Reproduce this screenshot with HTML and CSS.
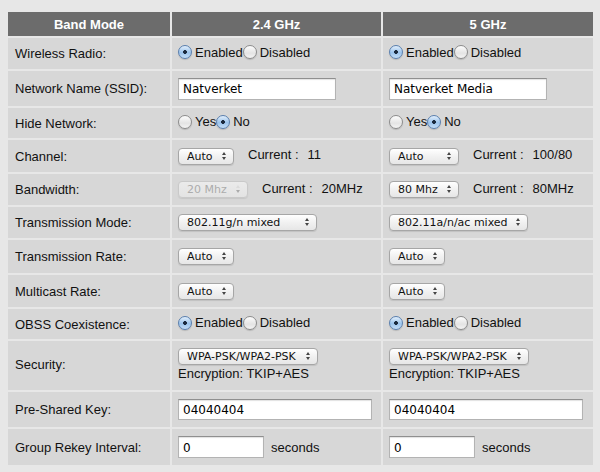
FILE: index.html
```html
<!doctype html>
<html lang="en">
<head>
<meta charset="utf-8">
<title>Wireless Settings</title>
<meta name="viewport" content="width=device-width,initial-scale=1">
<link rel="stylesheet" href="styles.css">
</head>
<body>
<table class="settings">
  <colgroup><col class="c-label"><col class="c-band"><col class="c-band5"></colgroup>
  <thead>
    <tr><th>Band Mode</th><th>2.4 GHz</th><th>5 GHz</th></tr>
  </thead>
  <tbody>
    <tr class="r-31">
      <td>Wireless Radio:</td>
      <td><label class="radio"><input type="radio" name="radio24" checked>Enabled</label><label class="radio"><input type="radio" name="radio24">Disabled</label></td>
      <td><label class="radio"><input type="radio" name="radio5" checked>Enabled</label><label class="radio"><input type="radio" name="radio5">Disabled</label></td>
    </tr>
    <tr class="r-35">
      <td>Network Name (SSID):</td>
      <td><input class="text w-ssid" type="text" value="Natverket"></td>
      <td><input class="text w-ssid" type="text" value="Natverket Media"></td>
    </tr>
    <tr class="r-30">
      <td>Hide Network:</td>
      <td><label class="radio"><input type="radio" name="hide24">Yes</label><label class="radio"><input type="radio" name="hide24" checked>No</label></td>
      <td><label class="radio"><input type="radio" name="hide5">Yes</label><label class="radio"><input type="radio" name="hide5" checked>No</label></td>
    </tr>
    <tr class="r-32">
      <td>Channel:</td>
      <td><span class="select w-56"><select><option>Auto</option></select></span><span class="current">Current :</span><span class="value">11</span></td>
      <td><span class="select w-70"><select><option>Auto</option></select></span><span class="current">Current :</span><span class="value">100/80</span></td>
    </tr>
    <tr class="r-31">
      <td>Bandwidth:</td>
      <td><span class="select w-70 disabled"><select disabled><option>20 Mhz</option></select></span><span class="current">Current :</span><span class="value">20MHz</span></td>
      <td><span class="select w-70"><select><option>80 Mhz</option></select></span><span class="current">Current :</span><span class="value">80MHz</span></td>
    </tr>
    <tr class="r-31">
      <td>Transmission Mode:</td>
      <td><span class="select w-139"><select><option>802.11g/n mixed</option></select></span></td>
      <td><span class="select w-139"><select><option>802.11a/n/ac mixed</option></select></span></td>
    </tr>
    <tr class="r-33">
      <td>Transmission Rate:</td>
      <td><span class="select w-56"><select><option>Auto</option></select></span></td>
      <td><span class="select w-56"><select><option>Auto</option></select></span></td>
    </tr>
    <tr class="r-32">
      <td>Multicast Rate:</td>
      <td><span class="select w-56"><select><option>Auto</option></select></span></td>
      <td><span class="select w-56"><select><option>Auto</option></select></span></td>
    </tr>
    <tr class="r-30">
      <td>OBSS Coexistence:</td>
      <td><label class="radio"><input type="radio" name="obss24" checked>Enabled</label><label class="radio"><input type="radio" name="obss24">Disabled</label></td>
      <td><label class="radio"><input type="radio" name="obss5" checked>Enabled</label><label class="radio"><input type="radio" name="obss5">Disabled</label></td>
    </tr>
    <tr class="r-47">
      <td>Security:</td>
      <td><span class="select w-140"><select><option>WPA-PSK/WPA2-PSK</option></select></span><div class="note">Encryption: TKIP+AES</div></td>
      <td><span class="select w-140"><select><option>WPA-PSK/WPA2-PSK</option></select></span><div class="note">Encryption: TKIP+AES</div></td>
    </tr>
    <tr class="r-35">
      <td>Pre-Shared Key:</td>
      <td><input class="text w-key" type="text" value="04040404"></td>
      <td><input class="text w-key" type="text" value="04040404"></td>
    </tr>
    <tr class="r-36">
      <td>Group Rekey Interval:</td>
      <td><input class="text w-rekey" type="text" value="0"><span class="unit">seconds</span></td>
      <td><input class="text w-rekey" type="text" value="0"><span class="unit">seconds</span></td>
    </tr>
  </tbody>
</table>
</body>
</html>
```

FILE: styles.css
```css
body{margin:10px 0 0 6px;background:#e7e7e7;font-family:"Liberation Sans",Arial,sans-serif;font-size:13px;color:#111;}
.settings{border-collapse:separate;border-spacing:2px;table-layout:fixed;width:589px;}
.c-label{width:162px;}
.c-band{width:209px;}
.c-band5{width:210px;}
th{background:#6c6c6c;color:#fff;font-weight:bold;font-size:13px;height:24px;padding:0;text-align:center;}
td{background:#d7d7d7;padding:0 6px;vertical-align:middle;white-space:nowrap;}
td:first-child{padding-left:7px;}
.r-30 td{height:30px;}
.r-31 td{height:31px;}
.r-32 td{height:32px;}
.r-33 td{height:33px;}
.r-35 td{height:35px;}
.r-36 td{height:36px;}
.r-47 td{height:47px;padding-bottom:2px;}

/* aqua-ish radio buttons */
.radio{display:inline-flex;align-items:center;}
.radio input{appearance:none;-webkit-appearance:none;margin:0 3px 0 0;width:14px;height:14px;border-radius:50%;
  border:1px solid #8c8c8c;background:linear-gradient(#fdfdfd,#e4e4e4 60%,#f4f4f4);box-shadow:0 1px 1px rgba(0,0,0,.15);}
.radio input:checked{border-color:#5a7fae;
  background:radial-gradient(circle,#1b2a3e 0 1.6px,transparent 2.2px),linear-gradient(#e2effc,#9cc4ec 55%,#c4ddf6);}

/* text fields */
.text{box-sizing:border-box;height:22px;margin:0;padding:1px 4px 0;border:1px solid #b3b3b3;border-top-color:#8f8f8f;
  box-shadow:inset 0 1px 1px rgba(0,0,0,.12);background:#fff;font-family:"DejaVu Sans",sans-serif;font-size:12px;color:#000;}
.w-ssid{width:158px;}
.w-key{width:194px;height:21px;}
.w-rekey{width:86px;}
.unit{margin-left:7px;}

/* popup buttons */
.select{position:relative;display:inline-block;vertical-align:middle;}
.select select{appearance:none;-webkit-appearance:none;box-sizing:border-box;width:100%;height:17px;margin:0;padding:0 0 0 8px;
  border:1px solid #a6a6a6;border-radius:4px;background:linear-gradient(#ffffff,#f1f1f1 50%,#e6e6e6);
  box-shadow:0 1px 1px rgba(0,0,0,.1);font-family:"DejaVu Sans",sans-serif;font-size:11px;color:#111;}
.select::before,.select::after{content:"";position:absolute;right:8px;border-left:2.5px solid transparent;border-right:2.5px solid transparent;}
.select::before{top:4px;border-bottom:3px solid #444;}
.select::after{top:9px;border-top:3px solid #444;}
.select.disabled select{color:#9a9a9a;border-color:#c4c4c4;background:linear-gradient(#f4f4f4,#e9e9e9);}
.select.disabled::before{border-bottom-color:#aaa;}
.select.disabled::after{border-top-color:#aaa;}
.w-56{width:56px;}
.w-70{width:70px;}
.w-139{width:139px;}
.w-140{width:140px;}
.current{margin-left:14px;}
.value{margin-left:9px;}
.note{margin-top:1px;}
```
